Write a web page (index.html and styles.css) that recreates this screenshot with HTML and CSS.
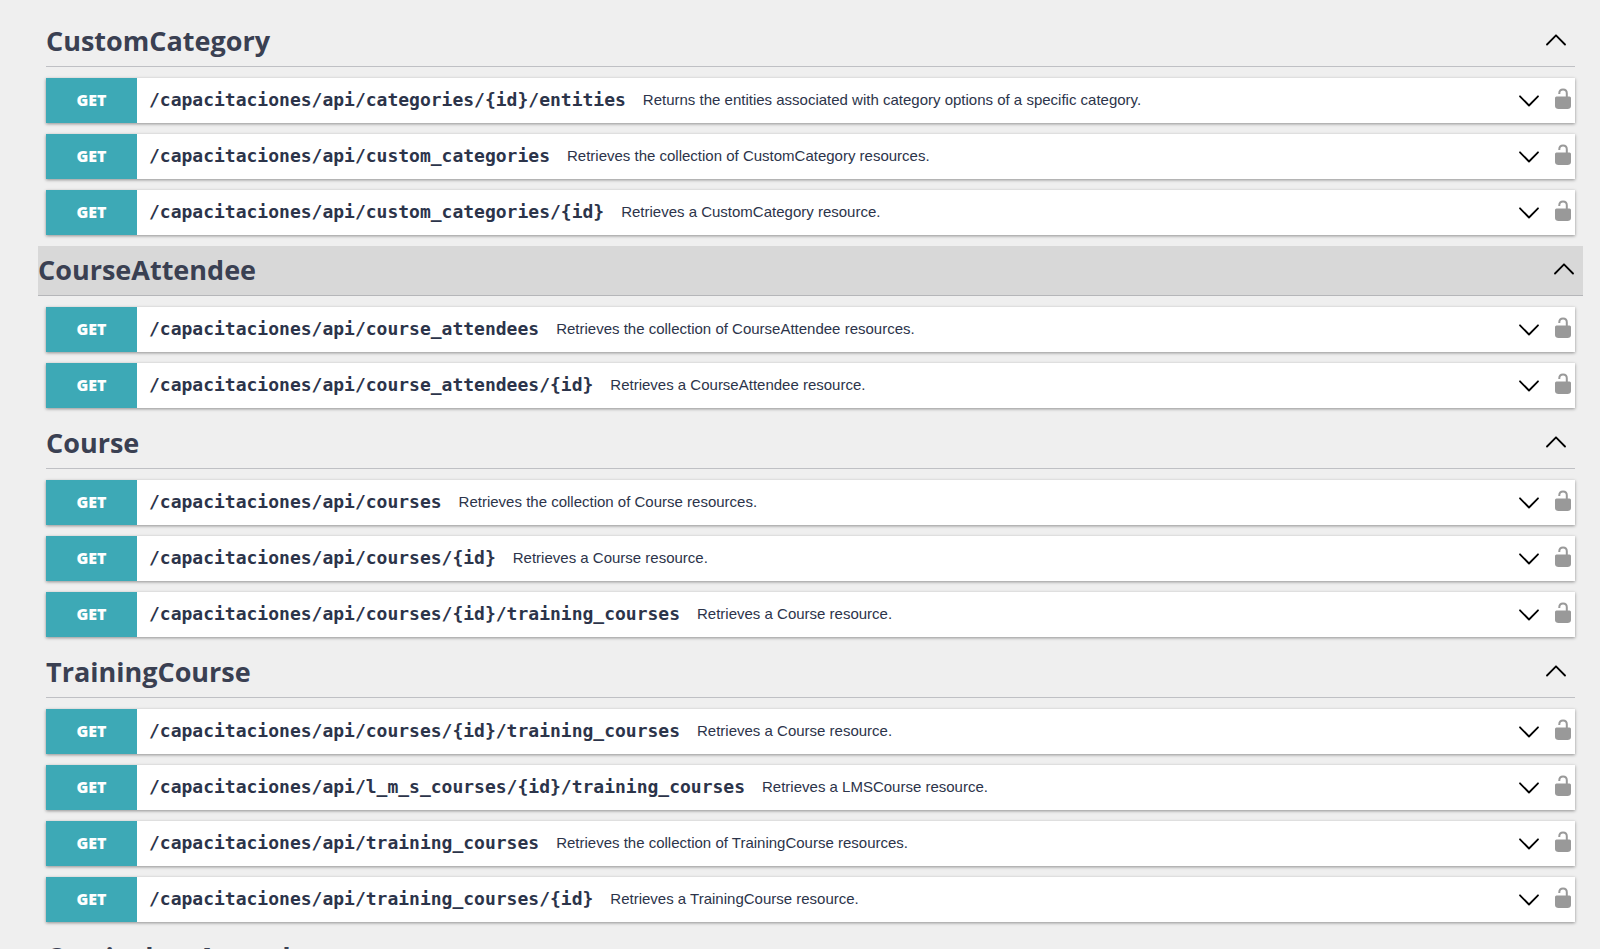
FILE: index.html
```
<!DOCTYPE html>
<html lang="en">
<head>
<meta charset="utf-8">
<title>API documentation</title>
<link rel="stylesheet" href="styles.css">
</head>
<body>
<svg class="sprite" aria-hidden="true">
  <symbol id="up" viewBox="0 0 20 12"><path d="M1 10.5 L10 1.3 L19 10.5"/></symbol>
  <symbol id="down" viewBox="0 0 20 12"><path d="M1 1.3 L10 10.5 L19 1.3"/></symbol>
  <symbol id="lock" viewBox="0 0 18 22"><path d="M5.300 6 V5.300 C5.300 0.200 12.800 0.200 12.800 5.300 V10" fill="none" stroke="#999" stroke-width="2"/><path d="M2.500 8.500 H15.500 Q17 8.500 17 10 V18 C17 19.800 15.500 21 13.500 21 H4.500 C2.500 21 1 19.800 1 18 V10 Q1 8.500 2.500 8.500 Z" fill="#999"/></symbol>
</svg>
<main class="docs" id="docs"></main>
<script src="app.js"></script>
</body>
</html>
```
FILE: styles.css
```
* { box-sizing: border-box; }
body {
  margin: 0;
  height: 100vh;
  overflow: hidden;
  background: #efefef;
  color: #3b4151;
  font-family: "Open Sans", sans-serif;
}
.sprite { position: absolute; width: 0; height: 0; }
.docs { padding: 17px 25px 0 46px; }
.tag {
  display: flex;
  align-items: center;
  height: 50px;
  margin-bottom: 11px;
  border-bottom: 1px solid #bfc0c4;
}
.tag-title {
  flex: 1;
  margin: 0;
  padding-bottom: 1px;
  font-size: 27px;
  line-height: 46px;
  font-weight: 700;
  color: #3a4052;
}
.tag.hovered {
  margin-left: -8px;
  margin-right: -8px;
  background: #d8d8d8;
  border-bottom-color: #b5b6b9;
}
.icon-button {
  display: flex;
  padding: 0;
  border: 0;
  background: none;
  cursor: pointer;
}
.tag .icon-button { padding: 0 9px 4px 0; }
.chevron {
  width: 20px;
  height: 12px;
  fill: none;
  stroke: #000;
  stroke-width: 1.8;
  stroke-linecap: round;
  stroke-linejoin: round;
}
.lock { width: 18px; height: 22px; }
.operation {
  display: flex;
  align-items: center;
  height: 45px;
  margin-bottom: 11px;
  background: #fff;
  box-shadow: 0 1px 3px rgba(0, 0, 0, .4);
}
.method {
  align-self: stretch;
  width: 91px;
  background: #3da9b6;
  color: #fff;
  font-size: 16px;
  line-height: 45px;
  font-weight: 800;
  text-align: center;
}
.path {
  margin: 0 17px 0 12px;
  padding-bottom: 2px;
  color: #2c344a;
  font: 700 18px/24px "DejaVu Sans Mono", monospace;
  text-decoration: none;
}
.summary {
  flex: 1;
  padding-bottom: 2px;
  color: #2c344a;
  font: 15px/20px "Liberation Sans", sans-serif;
}
.operation .lock-button { padding: 0 3px 4px 15px; }
```
FILE: app.js
```
const root = "/capacitaciones/api/";
const tags = [
  ["CustomCategory", [
    ["categories/{id}/entities", "Returns the entities associated with category options of a specific category."],
    ["custom_categories", "Retrieves the collection of CustomCategory resources."],
    ["custom_categories/{id}", "Retrieves a CustomCategory resource."]]],
  ["CourseAttendee", [
    ["course_attendees", "Retrieves the collection of CourseAttendee resources."],
    ["course_attendees/{id}", "Retrieves a CourseAttendee resource."]], true],
  ["Course", [
    ["courses", "Retrieves the collection of Course resources."],
    ["courses/{id}", "Retrieves a Course resource."],
    ["courses/{id}/training_courses", "Retrieves a Course resource."]]],
  ["TrainingCourse", [
    ["courses/{id}/training_courses", "Retrieves a Course resource."],
    ["l_m_s_courses/{id}/training_courses", "Retrieves a LMSCourse resource."],
    ["training_courses", "Retrieves the collection of TrainingCourse resources."],
    ["training_courses/{id}", "Retrieves a TrainingCourse resource."]]],
  ["CurriculumAttend", []]
];
document.getElementById("docs").innerHTML = tags.map(([name, operations, hovered]) => `
  <section>
    <div class="tag${hovered ? " hovered" : ""}">
      <h2 class="tag-title">${name}</h2>
      <button class="icon-button" aria-label="Collapse ${name}"><svg class="chevron"><use href="#up"/></svg></button>
    </div>
    ${operations.map(([path, summary]) => `
    <div class="operation">
      <span class="method">GET</span>
      <a class="path" href="#${path}">${root}${path}</a>
      <span class="summary">${summary}</span>
      <button class="icon-button" aria-label="Expand operation"><svg class="chevron"><use href="#down"/></svg></button>
      <button class="icon-button lock-button" aria-label="Authorize"><svg class="lock"><use href="#lock"/></svg></button>
    </div>`).join("")}
  </section>`).join("");
```
